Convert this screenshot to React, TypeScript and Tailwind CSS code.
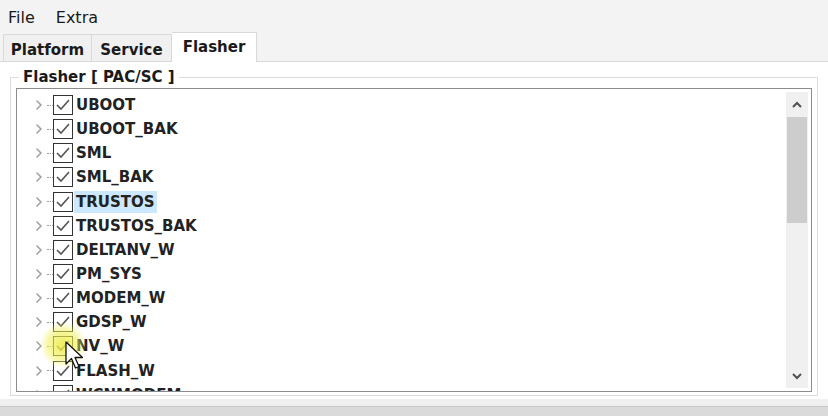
import { ChevronRight } from "lucide-react";

const items = [
  "UBOOT",
  "UBOOT_BAK",
  "SML",
  "SML_BAK",
  "TRUSTOS",
  "TRUSTOS_BAK",
  "DELTANV_W",
  "PM_SYS",
  "MODEM_W",
  "GDSP_W",
  "NV_W",
  "FLASH_W",
  "WCNMODEM",
];

const CheckBox = () => (
  <div className="flex h-[20px] w-[20px] shrink-0 items-center justify-center border border-[#333] bg-white">
    <svg width="16" height="14" viewBox="0 0 16 14">
      <path d="M2 7 L6 11 L14 2" fill="none" stroke="#555" strokeWidth="1.6" />
    </svg>
  </div>
);

const Cursor = () => (
  <div className="pointer-events-none absolute left-[40px] top-[322px]">
    {/* yellow click highlight from the recording */}
    <div className="absolute left-0 top-0 h-[46px] w-[46px] rounded-full bg-[radial-gradient(circle,rgba(235,235,60,0.85)_0%,rgba(240,240,90,0.55)_45%,rgba(255,255,255,0)_72%)]" />
    <svg
      className="absolute left-[25px] top-[19px]"
      width="20"
      height="30"
      viewBox="0 0 20 30"
    >
      <path
        d="M1 1 L1 23 L6.5 17.5 L10.5 27 L14 25.5 L10 16.5 L17.5 16.5 Z"
        fill="#fff"
        stroke="#111"
        strokeWidth="1.3"
        strokeLinejoin="round"
      />
    </svg>
  </div>
);

export default function App() {
  return (
    <div className="relative flex h-[416px] w-[828px] flex-col overflow-hidden bg-[#f3f3f3] font-['DejaVu_Sans',sans-serif] text-[#1a1a1a]">
      {/* Menu */}
      <div className="flex h-[34px] shrink-0 items-center gap-[21px] px-[8px] pt-[2px] text-[16px]">
        <span>File</span>
        <span>Extra</span>
      </div>

      {/* Tabs */}
      <div className="flex h-[28px] shrink-0 items-end border-b border-[#d9d9d9] pl-[3px]">
        <div className="flex h-[27px] w-[89px] items-center justify-center border border-b-0 border-[#d9d9d9] bg-[#f0f0f0] pt-[5px] text-[15px] font-bold">
          Platform
        </div>
        <div className="flex h-[27px] w-[80px] items-center justify-center border border-b-0 border-l-0 border-[#d9d9d9] bg-[#f0f0f0] pt-[5px] text-[15px] font-bold">
          Service
        </div>
        <div className="-mb-px flex h-[30px] w-[85px] items-center justify-center border border-b-0 border-l-0 border-[#d9d9d9] bg-white text-[15px] font-bold">
          Flasher
        </div>
      </div>

      {/* Tab page */}
      <div className="flex h-[337px] min-h-0 shrink-0 flex-col bg-white px-[10px] pt-[15px] pb-[3px]">
        <div className="relative flex min-h-0 flex-1 flex-col border border-[#dcdcdc] px-[5px] pt-[10px] pb-[3px]">
          <div className="absolute left-[8px] top-[-11px] bg-white px-[4px] text-[15px] font-bold leading-[20px]">
            Flasher [ PAC/SC ]
          </div>
          <div className="flex min-h-0 flex-1 overflow-hidden border border-[#8c8c8c] bg-white">
            <div className="min-h-0 flex-1 overflow-hidden pt-[4px]">
              {items.map((name) => (
                <div key={name} className="flex h-[24.15px] items-center">
                  <ChevronRight className="ml-[14px] h-[16px] w-[16px] shrink-0 text-[#a0a0a0]" strokeWidth={2.4} />
                  <div className="w-[6px] border-t border-dotted border-[#999]" />
                  <CheckBox />
                  <span
                    className={
                      "ml-[1px] px-[2px] text-[15px] font-bold leading-[22px] text-[#222] " +
                      (name === "TRUSTOS" ? "bg-[#cce8ff]" : "")
                    }
                  >
                    {name}
                  </span>
                </div>
              ))}
            </div>
            {/* Scrollbar */}
            <div className="my-[3px] mr-[3px] flex w-[22px] flex-col bg-[#f0f0f0]">
              <div className="flex h-[25px] items-center justify-center">
                <svg width="10" height="7" viewBox="0 0 10 7">
                  <path d="M1 6 L5 2 L9 6" fill="none" stroke="#505050" strokeWidth="2" />
                </svg>
              </div>
              <div className="mx-[1px] h-[106px] bg-[#cdcdcd]" />
              <div className="flex-1" />
              <div className="flex h-[24px] items-center justify-center">
                <svg width="10" height="7" viewBox="0 0 10 7">
                  <path d="M1 1 L5 5 L9 1" fill="none" stroke="#505050" strokeWidth="2" />
                </svg>
              </div>
            </div>
          </div>
        </div>
      </div>

      {/* Status strip */}
      <div className="h-[7px] shrink-0 bg-[#f0f0f0]" />
      <div className="flex-1 border-t border-[#c8c8c8] bg-[#dadada]" />

      <Cursor />
    </div>
  );
}
